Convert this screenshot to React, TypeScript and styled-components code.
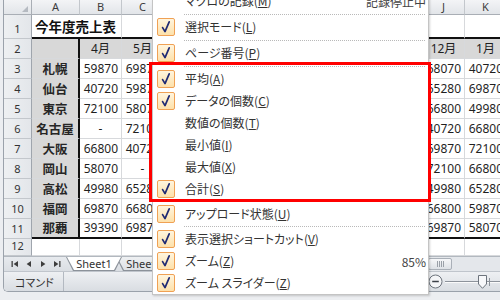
import React from "react";
import styled, { createGlobalStyle, css } from "styled-components";

const GlobalStyle = createGlobalStyle`
  html, body { margin: 0; padding: 0; background: #eceef1; }
  body { font-family: "Noto Sans CJK JP", "Noto Sans", sans-serif; }
  * { box-sizing: border-box; }
`;

const Screen = styled.div`
  position: relative;
  width: 500px;
  height: 300px;
  overflow: hidden;
  background: #eceef1;
  padding-left: 3px;
`;

const Window = styled.div`
  display: flex;
  flex-direction: column;
  height: 292px;
  border-left: 1px solid #9ba2ab;
  border-bottom: 1px solid #9ba2ab;
  border-bottom-left-radius: 5px;
  overflow: hidden;
  background: #fff;
`;

const Sheet = styled.div`
  display: grid;
  grid-template-columns: 28px 48px 42px 42px 259px 42px 42px;
  grid-template-rows: 15px 24px repeat(10, 20px) 17px;
  width: 496px;
  overflow: hidden;
`;

const Corner = styled.div`
  display: flex;
  align-items: flex-end;
  justify-content: flex-end;
  padding: 0 3px 2px 0;
  background: linear-gradient(#f2f3f5, #e2e5e9);
  border-right: 1px solid #a9aeb5;
  border-bottom: 1px solid #a9aeb5;
`;

const ColHead = styled.div`
  display: flex;
  align-items: flex-end;
  justify-content: center;
  padding-bottom: 1px;
  background: linear-gradient(#f3f4f6, #e2e5e9);
  border-right: 1px solid #c3c7cc;
  border-bottom: 1px solid #a9aeb5;
  font: 11px/12px "Noto Sans", sans-serif;
  color: #3c3c3c;
`;

const RowHead = styled.div`
  display: flex;
  align-items: flex-end;
  justify-content: center;
  padding-bottom: 2px;
  background: linear-gradient(90deg, #eef0f2, #e3e6ea);
  border-right: 1px solid #9fa5ad;
  border-bottom: 1px solid #c3c7cc;
  font: 11px/14px "Noto Sans", sans-serif;
  color: #333;
`;

type CellProps = {
  $bg?: string;
  $align?: "flex-start" | "center" | "flex-end";
  $bold?: boolean;
  $ruleBottom?: boolean;
  $ruleRight?: boolean;
  $span?: number;
  $title?: boolean;
};

const Cell = styled.div<CellProps>`
  display: flex;
  align-items: center;
  justify-content: ${(p) => p.$align ?? "flex-end"};
  padding: 0 3px;
  white-space: nowrap;
  background: ${(p) => p.$bg ?? "#fff"};
  border-right: 1px solid #d7d9dc;
  border-bottom: 1px solid #d7d9dc;
  font: 12px/14px "Noto Sans", "Noto Sans CJK JP", sans-serif;
  color: #1f1f1f;
  ${(p) => p.$span && css`grid-column: span ${p.$span};`}
  ${(p) =>
    p.$bold &&
    css`
      font-family: "Noto Sans CJK JP", sans-serif;
      font-size: 12.5px;
      font-weight: 700;
      color: #262626;
    `}
  ${(p) =>
    p.$title &&
    css`
      font-family: "Noto Sans CJK JP", sans-serif;
      font-size: 13.5px;
      font-weight: 700;
      color: #111;
      padding-left: 3px;
    `}
  ${(p) => p.$ruleBottom && css`border-bottom: 2px solid #111;`}
  ${(p) => p.$ruleRight && css`border-right: 2px solid #111;`}
`;

const TabBar = styled.div`
  display: flex;
  align-items: stretch;
  height: 15px;
  background: linear-gradient(#e7eaee, #dadee3);
  border-top: 1px solid #b2b8bf;
`;

const Nav = styled.div`
  display: flex;
  align-items: center;
  padding-left: 4px;
`;

const NavSlot = styled.div`
  width: 14px;
  display: flex;
  align-items: center;
  justify-content: center;
`;

const Tabs = styled.div`
  display: flex;
  align-items: stretch;
  margin-left: 2px;
`;

const TabOuter = styled.div<{ $active?: boolean }>`
  display: flex;
  width: 56px;
  margin-right: -6px;
  background: #8c929a;
  clip-path: polygon(0 0, 100% 0, calc(100% - 7px) 100%, 7px 100%);
  z-index: ${(p) => (p.$active ? 1 : 0)};
`;

const TabInner = styled.div<{ $active?: boolean }>`
  flex: 1;
  margin: 0 1px 1px 1px;
  display: flex;
  align-items: center;
  justify-content: center;
  background: ${(p) => (p.$active ? "#ffffff" : "linear-gradient(#eef0f2, #dfe2e6)")};
  clip-path: polygon(0 0, 100% 0, calc(100% - 7px) 100%, 7px 100%);
  font: 11px "Noto Sans", sans-serif;
  color: #333;
`;

const HScroll = styled.div`
  margin-left: auto;
  width: 80px;
  display: flex;
  align-items: center;
  padding-left: 8px;
  background: #e4e7eb;
`;

const Thumb = styled.div`
  width: 24px;
  height: 12px;
  border: 1px solid #aab0b8;
  border-radius: 2px;
  background: linear-gradient(#f6f7f9, #dde1e6);
  display: flex;
  align-items: center;
  justify-content: center;
`;

const StatusBar = styled.div`
  display: flex;
  align-items: center;
  height: 20px;
  background: linear-gradient(#eef0f3, #d9dde2);
  border-top: 1px solid #c0c5cc;
`;

const StatusText = styled.div`
  padding: 0 9px 0 11px;
  height: 100%;
  display: flex;
  align-items: center;
  border-right: 1px solid #b3b9c1;
  font: 11px "Noto Sans CJK JP", sans-serif;
  font-feature-settings: "palt";
  color: #333;
`;

const ZoomCtl = styled.div`
  margin-left: auto;
  width: 72px;
  display: flex;
  align-items: center;
`;

const SliderTrack = styled.div`
  position: relative;
  flex: 1;
  height: 14px;
  display: flex;
  align-items: center;
`;

const TrackLine = styled.div`
  flex: 1;
  height: 2px;
  margin-left: 2px;
  border-top: 1px solid #8d939b;
  border-bottom: 1px solid #fafafa;
`;

const SliderKnob = styled.svg`
  position: absolute;
  left: 35px;
  top: 0;
`;

const SliderTick = styled.div`
  position: absolute;
  left: 46px;
  top: 3px;
  width: 1px;
  height: 8px;
  background: #8d939b;
`;

const MenuBox = styled.div`
  position: absolute;
  left: 152px;
  top: -11px;
  width: 277px;
  background: #fff;
  border: 1px solid #c4c4c4;
  box-shadow: 1px 1px 2px rgba(0, 0, 0, 0.18);
  display: flex;
  flex-direction: column;
  font-family: "Noto Sans CJK JP", sans-serif;
  font-feature-settings: "palt";
  font-size: 12px;
  color: #333;
  z-index: 2;
`;

const Item = styled.div`
  height: 22px;
  display: flex;
  align-items: center;
`;

const Gutter = styled.div`
  width: 28px;
  height: 100%;
  display: flex;
  align-items: center;
  padding-left: 4px;
`;

const CheckBox = styled.div`
  width: 18px;
  height: 18px;
  border: 1px solid #f0a154;
  border-radius: 2px;
  background: linear-gradient(#fff5de, #fde1ab);
  display: flex;
  align-items: center;
  justify-content: center;
`;

const Label = styled.div`
  padding-left: 4px;
  white-space: nowrap;
  line-height: 16px;
`;

const Acc = styled.span`
  text-decoration: underline;
  text-underline-offset: 1px;
`;

const Value = styled.div`
  margin-left: auto;
  padding-right: 2px;
  white-space: nowrap;
  color: #444;
`;

const Sep = styled.div<{ $h: number }>`
  height: ${(p) => p.$h}px;
  display: flex;
  align-items: center;
  padding: 0 3px 0 31px;
  &::after {
    content: "";
    flex: 1;
    border-top: 1px dotted #b9b9b9;
  }
`;

const Highlight = styled.div`
  position: absolute;
  left: 149px;
  top: 62px;
  width: 282px;
  height: 140px;
  border: 3px solid #ff0000;
  z-index: 3;
  pointer-events: none;
`;

const Check = () => (
  <svg width="12" height="14" viewBox="0 0 12 14">
    <path d="M2.6 7.6 L5 11.6 L9.2 1.8" fill="none" stroke="#1f2a73" strokeWidth="1.7" strokeLinecap="round" strokeLinejoin="round" />
  </svg>
);

type MenuEntry =
  | { kind: "item"; text: string; acc: string; checked: boolean; value?: string }
  | { kind: "sep"; h: number };

const menu: MenuEntry[] = [
  { kind: "item", text: "マクロの記録", acc: "M", checked: false, value: "記録停止中" },
  { kind: "sep", h: 4 },
  { kind: "item", text: "選択モード", acc: "L", checked: true },
  { kind: "sep", h: 4 },
  { kind: "item", text: "ページ番号", acc: "P", checked: true },
  { kind: "sep", h: 4 },
  { kind: "item", text: "平均", acc: "A", checked: true },
  { kind: "item", text: "データの個数", acc: "C", checked: true },
  { kind: "item", text: "数値の個数", acc: "T", checked: false },
  { kind: "item", text: "最小値", acc: "I", checked: false },
  { kind: "item", text: "最大値", acc: "X", checked: false },
  { kind: "item", text: "合計", acc: "S", checked: true },
  { kind: "sep", h: 3 },
  { kind: "item", text: "アップロード状態", acc: "U", checked: true },
  { kind: "sep", h: 3 },
  { kind: "item", text: "表示選択ショートカット", acc: "V", checked: true },
  { kind: "item", text: "ズーム", acc: "Z", checked: true, value: "85%" },
  { kind: "item", text: "ズーム スライダー", acc: "Z", checked: true },
];

const data: [string, string, string, string, string][] = [
  ["札幌", "59870", "69870", "68070", "40720"],
  ["仙台", "40720", "59870", "65280", "69870"],
  ["東京", "72100", "58070", "66800", "49980"],
  ["名古屋", "-", "72100", "40720", "66800"],
  ["大阪", "66800", "40720", "69870", "72100"],
  ["岡山", "58070", "-", "72100", "66800"],
  ["高松", "49980", "65280", "49980", "65280"],
  ["福岡", "69870", "66800", "66800", "59870"],
  ["那覇", "39390", "69870", "69870", "58070"],
];

const GRAY = "#d8d8d8";

const NumCell = ({ v, last }: { v: string; last: boolean }) => (
  <Cell $align={v === "-" ? "center" : "flex-end"} $ruleBottom={last}>
    {v}
  </Cell>
);

const NavIcon = ({ d }: { d: string }) => (
  <svg width="8" height="8" viewBox="0 0 8 8">
    <path d={d} fill="#3d3d3d" />
  </svg>
);

export default function App() {
  return (
    <Screen>
      <GlobalStyle />
      <Window>
        <Sheet>
          <Corner>
            <svg width="6" height="6" viewBox="0 0 6 6">
              <path d="M6 0 L6 6 L0 6 Z" fill="#b5bac1" />
            </svg>
          </Corner>
          <ColHead>A</ColHead>
          <ColHead>B</ColHead>
          <ColHead>C</ColHead>
          <ColHead />
          <ColHead>J</ColHead>
          <ColHead>K</ColHead>

          <RowHead>1</RowHead>
          <Cell $span={2} $title $align="flex-start" $ruleBottom>
            今年度売上表
          </Cell>
          <Cell $ruleBottom />
          <Cell $ruleBottom />
          <Cell $ruleBottom />
          <Cell $ruleBottom />

          <RowHead>2</RowHead>
          <Cell $bg={GRAY} $ruleRight />
          <Cell $bg={GRAY} $align="center">4月</Cell>
          <Cell $bg={GRAY} $align="center">5月</Cell>
          <Cell $bg={GRAY} />
          <Cell $bg={GRAY} $align="center">12月</Cell>
          <Cell $bg={GRAY} $align="center">1月</Cell>

          {data.map((r, i) => {
            const last = i === data.length - 1;
            return (
              <React.Fragment key={r[0]}>
                <RowHead>{i + 3}</RowHead>
                <Cell $bg={GRAY} $bold $align="center" $ruleRight $ruleBottom={last}>
                  {r[0]}
                </Cell>
                <NumCell v={r[1]} last={last} />
                <NumCell v={r[2]} last={last} />
                <Cell $ruleBottom={last} />
                <NumCell v={r[3]} last={last} />
                <NumCell v={r[4]} last={last} />
              </React.Fragment>
            );
          })}

          <RowHead>12</RowHead>
          <Cell />
          <Cell />
          <Cell />
          <Cell />
          <Cell />
          <Cell />
        </Sheet>

        <TabBar>
          <Nav>
            <NavSlot>
              <NavIcon d="M0.5 1 H1.8 V7 H0.5 Z M7 1 V7 L2.6 4 Z" />
            </NavSlot>
            <NavSlot>
              <NavIcon d="M6 1 V7 L1.6 4 Z" />
            </NavSlot>
            <NavSlot>
              <NavIcon d="M2 1 V7 L6.4 4 Z" />
            </NavSlot>
            <NavSlot>
              <NavIcon d="M1 1 V7 L5.4 4 Z M6.2 1 H7.5 V7 H6.2 Z" />
            </NavSlot>
          </Nav>
          <Tabs>
            <TabOuter $active>
              <TabInner $active>Sheet1</TabInner>
            </TabOuter>
            <TabOuter>
              <TabInner>Sheet2</TabInner>
            </TabOuter>
          </Tabs>
          <HScroll>
            <Thumb>
              <svg width="7" height="6" viewBox="0 0 7 6">
                <path d="M0.5 0 V6 M2.5 0 V6 M4.5 0 V6 M6.5 0 V6" stroke="#9aa0a8" strokeWidth="1" />
              </svg>
            </Thumb>
          </HScroll>
        </TabBar>

        <StatusBar>
          <StatusText>コマンド</StatusText>
          <ZoomCtl>
            <svg width="15" height="15" viewBox="0 0 15 15">
              <circle cx="7.5" cy="7.5" r="6.5" fill="#f4f5f7" stroke="#6d747d" />
              <path d="M4.2 7.5 H10.8" stroke="#3c4148" strokeWidth="1.4" />
            </svg>
            <SliderTrack>
              <TrackLine />
              <SliderTick />
              <SliderKnob width="9" height="14" viewBox="0 0 9 14">
                <path d="M0.5 0.5 H8.5 V9 L4.5 13.3 L0.5 9 Z" fill="#f7f8fa" stroke="#6d747d" />
              </SliderKnob>
            </SliderTrack>
          </ZoomCtl>
        </StatusBar>
      </Window>

      <MenuBox>
        {menu.map((m, i) =>
          m.kind === "sep" ? (
            <Sep key={i} $h={m.h} />
          ) : (
            <Item key={i}>
              <Gutter>
                {m.checked && (
                  <CheckBox>
                    <Check />
                  </CheckBox>
                )}
              </Gutter>
              <Label>
                {m.text}(<Acc>{m.acc}</Acc>)
              </Label>
              {m.value && <Value>{m.value}</Value>}
            </Item>
          )
        )}
      </MenuBox>
      <Highlight />
    </Screen>
  );
}
